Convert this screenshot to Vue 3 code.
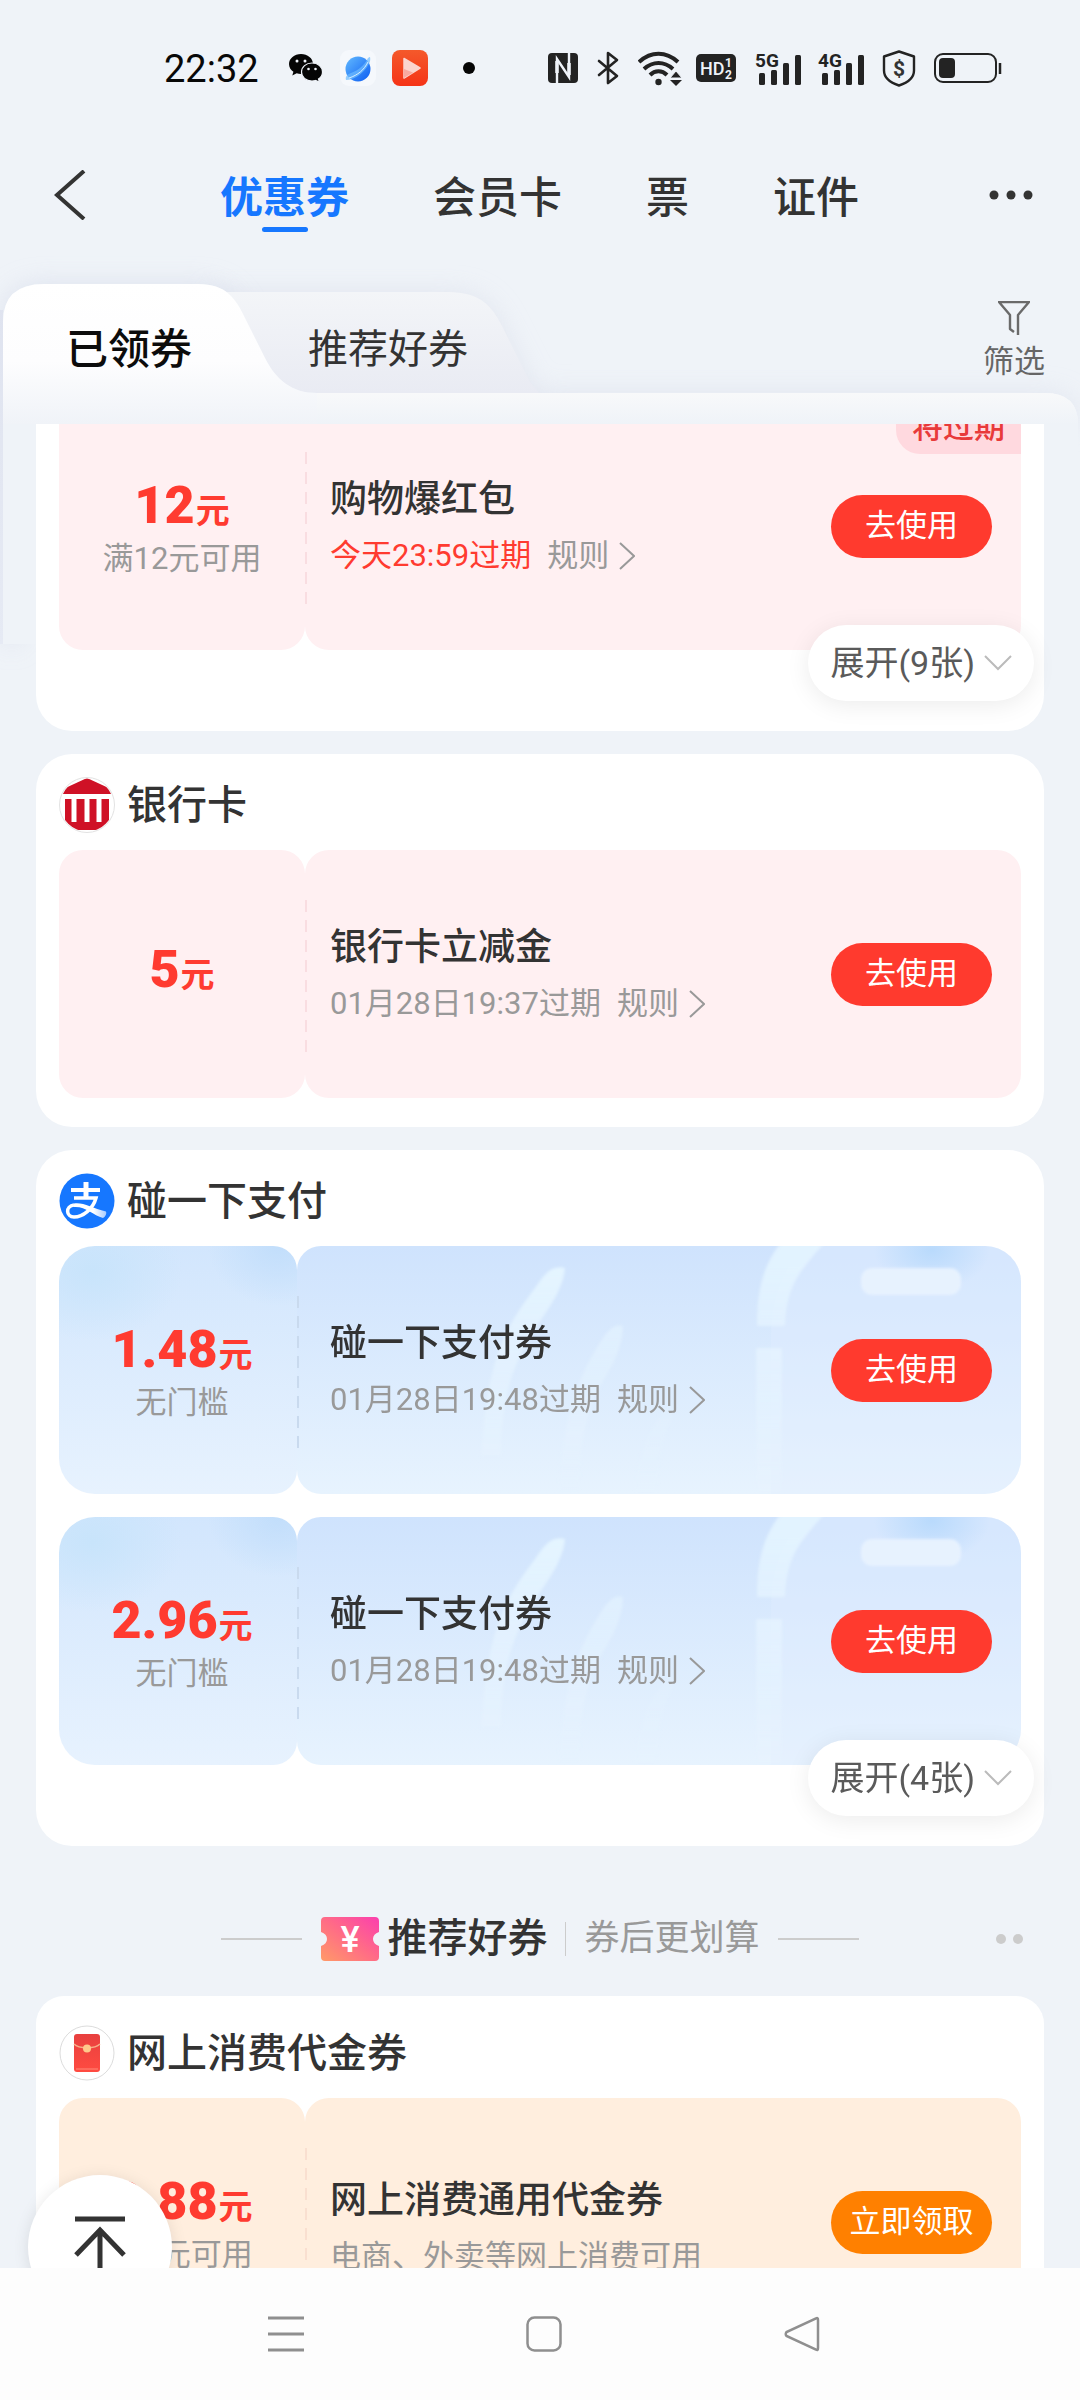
<script setup>
import { ref } from 'vue'

const topTabs = ['优惠券', '会员卡', '票', '证件']
const activeTop = ref(0)

const groups = [
  {
    id: 'shop',
    expand: '展开(9张)',
    coupons: [
      { amount: '12', cond: '满12元可用', title: '购物爆红包', note: '今天23:59过期', urgent: true, rule: true, badge: '将过期', tone: 'pink', action: '去使用' },
    ],
  },
  {
    id: 'bank',
    name: '银行卡',
    coupons: [
      { amount: '5', title: '银行卡立减金', note: '01月28日19:37过期', rule: true, tone: 'pink', action: '去使用' },
    ],
  },
  {
    id: 'alipay',
    name: '碰一下支付',
    expand: '展开(4张)',
    coupons: [
      { amount: '1.48', cond: '无门槛', title: '碰一下支付券', note: '01月28日19:48过期', rule: true, tone: 'blue', action: '去使用' },
      { amount: '2.96', cond: '无门槛', title: '碰一下支付券', note: '01月28日19:48过期', rule: true, tone: 'blue', action: '去使用' },
    ],
  },
  {
    id: 'online',
    name: '网上消费代金券',
    recommended: true,
    coupons: [
      { amount: '8.88', cond: '满9元可用', title: '网上消费通用代金券', note: '电商、外卖等网上消费可用', tone: 'orange', action: '立即领取' },
    ],
  },
]
</script>

<template>
  <div class="app">
    <div class="status">
      <span class="clock">22:32</span>
      <svg class="wechat" width="34" height="28" viewBox="0 0 34 28">
        <path d="M12 0C5.400 0 0 4.500 0 10c0 3.200 1.700 6 4.400 7.800L3.300 21.500l4.400-2.200c1.300.4 2.700.6 4.300.6 6.600 0 12-4.500 12-10S18.600 0 12 0z" fill="#050505" />
        <path d="M23 9c-6 0-10.500 4-10.500 9s4.500 9 10.500 9c1.300 0 2.500-.2 3.600-.5l3.900 1.900-1-3.300c2.500-1.700 4-4.200 4-7.100 0-5-4.500-9-10.500-9z" fill="#050505" stroke="#eff3f9" stroke-width="1.200" />
        <circle cx="8" cy="7" r="1.500" fill="#eff3f9" /><circle cx="16" cy="7" r="1.500" fill="#eff3f9" />
        <circle cx="19.500" cy="15" r="1.300" fill="#eff3f9" /><circle cx="26.500" cy="15" r="1.300" fill="#eff3f9" />
      </svg>
      <svg class="planet" width="36" height="36" viewBox="0 0 36 36">
        <defs>
          <linearGradient id="globe" x1="0" y1="0" x2="1" y2="1"><stop offset="0" stop-color="#63baff" /><stop offset="1" stop-color="#0b5cf2" /></linearGradient>
        </defs>
        <rect width="36" height="36" rx="9" fill="#f5f8fc" />
        <circle cx="18" cy="19" r="12.500" fill="url(#globe)" />
        <path d="M6 30c-1-4 2-6 5-7C19 20 24 15 27 10c1-3 3-3 3-3 1 4-1 7-3 10C22 24 14 30 6 30z" fill="#6dbcff" opacity=".7" />
        <path d="M9 28c9-3 15-8 19-16" stroke="#d9f0ff" stroke-width="1" fill="none" />
      </svg>
      <svg class="player" width="36" height="36" viewBox="0 0 36 36">
        <defs>
          <linearGradient id="play" x1="0" y1="0" x2="0" y2="1"><stop offset="0" stop-color="#f4592b" /><stop offset="1" stop-color="#f53317" /></linearGradient>
        </defs>
        <rect width="36" height="36" rx="8" fill="url(#play)" />
        <path d="M12 8.500L28 18 12 28z" fill="#fbd5cf" stroke="#fbd5cf" stroke-width="1.500" stroke-linejoin="round" />
        <path d="M12 28V19l9 3.500z" fill="#f8aaa0" />
      </svg>
      <span class="bullet"></span>
      <svg class="nfc" width="30" height="30" viewBox="0 0 30 30">
        <rect width="30" height="30" rx="4" fill="#232323" />
        <path d="M9 30V6l12 18V0" fill="none" stroke="#eff3f9" stroke-width="2.400" />
        <path d="M9 8v12M21 10v12" stroke="#eff3f9" stroke-width="3.500" />
      </svg>
      <svg class="bt" width="22" height="34" viewBox="0 0 22 34">
        <path d="M2 10l18 15-9 7V2l9 7L2 24" fill="none" stroke="#232323" stroke-width="2.600" stroke-linejoin="round" stroke-linecap="round" />
      </svg>
      <svg class="wifi" width="45" height="35" viewBox="0 0 45 35">
        <g fill="none" stroke="#232323" stroke-width="4">
          <path d="M1 11c12-11 27-11 39 0" /><path d="M6 18c9-8 20-8 29 0" /><path d="M12 24c5-5 12-5 17 0" />
        </g>
        <circle cx="20.500" cy="31" r="3.200" fill="#232323" />
        <path d="M38 20l6 7H32z" fill="#232323" stroke="#eff3f9" /><path d="M38 35l6-6H32z" fill="#232323" />
      </svg>
      <svg class="hd" width="40" height="28" viewBox="0 0 40 28">
        <rect width="40" height="28" rx="5" fill="#232323" />
        <text x="4" y="21" font-size="18" font-weight="500" fill="#eff3f9" font-family="Roboto, sans-serif">HD</text>
        <text x="29" y="13" font-size="12" font-weight="700" fill="#eff3f9" font-family="Roboto, sans-serif">1</text>
        <text x="29" y="25" font-size="12" font-weight="700" fill="#eff3f9" font-family="Roboto, sans-serif">2</text>
      </svg>
      <svg v-for="g in ['5G', '4G']" :key="g" class="signal" width="47" height="33" viewBox="0 0 47 33">
        <g fill="#232323">
          <rect x="4" y="21" width="6" height="12" rx="1.500" /><rect x="16" y="18" width="6" height="15" rx="1.500" />
          <rect x="28" y="11" width="6" height="22" rx="1.500" /><rect x="40" y="3" width="6" height="30" rx="1.500" />
          <text x="0" y="15" font-size="19" font-weight="700" font-family="Roboto, sans-serif">{{ g }}</text>
        </g>
      </svg>
      <svg class="shield" width="34" height="37" viewBox="0 0 34 37">
        <path d="M17 1.500l15 5v14c0 8-6 12-15 15C8 32.500 2 28.500 2 20.500v-14z" fill="none" stroke="#232323" stroke-width="2.400" stroke-linejoin="round" />
        <text x="17" y="26" text-anchor="middle" font-size="21" font-weight="700" fill="#333" font-family="Roboto, sans-serif">$</text>
      </svg>
      <svg class="battery" width="68" height="30" viewBox="0 0 68 30">
        <rect x="1" y="1" width="61" height="28" rx="8" fill="none" stroke="#232323" stroke-width="2" />
        <rect x="5" y="5" width="16" height="20" rx="4" fill="#232323" />
        <path d="M66 10v11" stroke="#232323" stroke-width="2.500" />
      </svg>
    </div>

    <header class="topbar">
      <button class="icon-btn back" aria-label="返回">
        <svg width="32" height="50" viewBox="0 0 32 50"><path d="M30 1L3 25l27 24" fill="none" stroke="#333" stroke-width="4" /></svg>
      </button>
      <nav class="tabs">
        <button v-for="(t, i) in topTabs" :key="t" class="tab" :class="{ on: i === activeTop }" @click="activeTop = i">{{ t }}</button>
      </nav>
      <button class="icon-btn more" aria-label="更多">
        <svg width="44" height="10" viewBox="0 0 44 10"><g fill="#333"><circle cx="5" cy="5" r="4.500" /><circle cx="22" cy="5" r="4.500" /><circle cx="39" cy="5" r="4.500" /></g></svg>
      </button>
    </header>

    <div class="folder">
      <svg class="folder-bg" viewBox="0 0 1080 410" preserveAspectRatio="none">
        <defs>
          <linearGradient id="front" gradientUnits="userSpaceOnUse" x1="0" y1="34" x2="0" y2="174"><stop offset="0" stop-color="#fff" /><stop offset=".55" stop-color="#fdfdfe" /><stop offset="1" stop-color="#f0f3f8" /></linearGradient>
          <linearGradient id="strip" gradientUnits="userSpaceOnUse" x1="0" y1="143" x2="0" y2="174"><stop offset="0" stop-color="#f8f9fa" /><stop offset="1" stop-color="#eff3f8" /></linearGradient>
          <linearGradient id="rear" gradientUnits="userSpaceOnUse" x1="0" y1="42" x2="0" y2="143"><stop offset="0" stop-color="#f3f5f8" /><stop offset="1" stop-color="#e9ebf3" /></linearGradient>
          <linearGradient id="side" gradientUnits="userSpaceOnUse" x1="0" y1="40" x2="0" y2="395"><stop offset="0" stop-color="#dfe3ef" /><stop offset="1" stop-color="#e6eaf4" /></linearGradient>
          <filter id="soft" x="-10%" y="-20%" width="120%" height="140%"><feGaussianBlur stdDeviation="13" /></filter>
        </defs>
        <path d="M210 42H448C480 42 492 56 502 76L530 132Q536 143 550 143H1045Q1078 143 1078 176H200Z" fill="#dde1ec" filter="url(#soft)" opacity=".75" />
        <path d="M3 394V72Q3 34 44 34H198C226 34 236 48 246 70L270 115C280 134 292 143 317 143V174H20V394Z" fill="#d9deeb" filter="url(#soft)" opacity=".8" />
        <path d="M0 60V394H3V60Z" fill="url(#side)" />
        <path d="M220 42H448C480 42 492 56 502 76L530 132L540 144H220Z" fill="url(#rear)" />
        <path d="M3 394V72Q3 34 44 34H198C226 34 236 48 246 70L265 108C276 130 292 143 317 143H1045Q1078 143 1078 174V394Z" fill="#eff3f8" />
        <path d="M3 174V72Q3 34 44 34H198C226 34 236 48 246 70L265 108C276 130 292 143 317 143H1045Q1078 143 1078 174Z" fill="url(#front)" />
        <path d="M317 143H1045Q1078 143 1078 174H317Z" fill="url(#strip)" />
      </svg>
      <button class="ftab front">已领券</button>
      <button class="ftab rear">推荐好券</button>
      <button class="filter">
        <svg width="32" height="35" viewBox="0 0 32 35"><path d="M25 1H1l0 0 11 13v14l4 3M20 34V14L31 1H1" fill="none" stroke="#6a6a6a" stroke-width="2.400" stroke-linejoin="round" /></svg>
        <span>筛选</span>
      </button>
    </div>

    <main class="scroller">
      <div class="list">
        <template v-for="g in groups" :key="g.id">
          <div v-if="g.recommended" class="divider">
            <span class="rule-line"></span>
            <svg class="ticket" width="58" height="44" viewBox="0 0 58 44">
              <defs><linearGradient id="tk" x1="0" y1="1" x2="1" y2="0"><stop offset="0" stop-color="#ff9a68" /><stop offset=".5" stop-color="#ff6c86" /><stop offset="1" stop-color="#fb3fae" /></linearGradient></defs>
              <path d="M4 0H54Q58 0 58 4V15Q52 17 52 22T58 29V40Q58 44 54 44H4Q0 44 0 40V29Q6 27 6 22T0 15V4Q0 0 4 0Z" fill="url(#tk)" />
              <text x="29" y="35" text-anchor="middle" font-size="36" font-weight="500" fill="#fff" font-family="Roboto, sans-serif">¥</text>
            </svg>
            <h2>推荐好券</h2>
            <span class="bar"></span>
            <span class="tagline">券后更划算</span>
            <span class="rule-line"></span>
            <span class="pager"><i></i><i></i></span>
          </div>

          <section class="card" :class="{ expandable: g.expand, roomy: g.recommended }">
            <header v-if="g.name" class="card-head">
              <svg v-if="g.id === 'bank'" width="56" height="56" viewBox="0 0 56 56">
                <defs><clipPath id="disc"><circle cx="28" cy="28" r="26.500" /></clipPath></defs>
                <circle cx="28" cy="28" r="27.500" fill="#fff" stroke="#e2e2e2" />
                <g clip-path="url(#disc)">
                  <path d="M28 1L54 13V17H2V13Z" fill="#cf1126" />
                  <path d="M6 22H50V45L40 53H16L6 45Z" fill="#cf1126" />
                  <path d="M15 22v23M28 22v23M40 22v23" stroke="#fff" stroke-width="5" />
                </g>
              </svg>
              <svg v-else-if="g.id === 'alipay'" width="56" height="56" viewBox="0 0 56 56">
                <defs><linearGradient id="tail" x1="0" y1="0" x2="1" y2="0"><stop offset=".6" stop-color="#fff" /><stop offset="1" stop-color="#a9ccff" /></linearGradient></defs>
                <circle cx="28" cy="28" r="27.500" fill="#1677ff" />
                <g fill="none" stroke="#fff">
                  <path d="M12 17H41" stroke-width="4" /><path d="M27 9V25" stroke-width="5" />
                  <path d="M15 25H37C34 36 24 44 15 44C7 44 6 33 15 32" stroke-width="3.500" />
                </g>
                <path d="M15 30.500C24 29 33 35 47 38.500C48 41 46 44 44 45C34 42 26 33 15 34Z" fill="url(#tail)" />
              </svg>
              <svg v-else width="56" height="56" viewBox="0 0 56 56">
                <defs><linearGradient id="env" x1="0" y1="0" x2="0" y2="1"><stop offset="0" stop-color="#e8403f" /><stop offset="1" stop-color="#ff4b41" /></linearGradient></defs>
                <circle cx="28" cy="28" r="27" fill="#fff" stroke="#dcdcdc" />
                <rect x="15" y="9" width="26" height="38" rx="3" fill="url(#env)" />
                <path d="M15 19C20 24 36 24 41 19" fill="none" stroke="#f6b08a" stroke-width="1.500" />
                <path d="M17 44H39" stroke="#ff8b7a" />
                <circle cx="28" cy="23.500" r="4" fill="#ffc98b" />
              </svg>
              <h2>{{ g.name }}</h2>
            </header>

            <div class="coupons">
              <article v-for="(c, i) in g.coupons" :key="i" class="coupon" :class="c.tone">
                <div class="value">
                  <p class="price"><b>{{ c.amount }}</b>元</p>
                  <p v-if="c.cond" class="cond">{{ c.cond }}</p>
                </div>
                <div class="detail">
                  <svg v-if="c.tone === 'blue'" class="art" viewBox="0 0 724 248" preserveAspectRatio="none">
                    <defs>
                      <linearGradient id="ray" gradientUnits="userSpaceOnUse" x1="0" y1="20" x2="0" y2="248"><stop offset="0" stop-color="#e4f4ff" /><stop offset="1" stop-color="#e8f4ff" stop-opacity=".3" /></linearGradient>
                      <radialGradient id="spot"><stop offset="0" stop-color="#b9dafc" /><stop offset="1" stop-color="#b9dafc" stop-opacity="0" /></radialGradient>
                      <filter id="haze"><feGaussianBlur stdDeviation="1.500" /></filter>
                    </defs>
                    <path d="M508 0H724V248H474V90Q474 35 508 0Z" fill="#e2eefe" opacity=".35" />
                    <ellipse cx="635" cy="4" rx="58" ry="40" fill="url(#spot)" />
                    <g filter="url(#haze)">
                      <path d="M268 22C254 18 246 30 238 42C204 86 190 120 184 210L204 210C206 150 214 120 240 80C256 56 266 42 268 22Z" fill="url(#ray)" />
                      <path d="M326 80C316 76 308 88 302 98C278 136 264 180 262 244L282 244C284 196 290 160 308 132C320 112 326 96 326 80Z" fill="url(#ray)" opacity=".75" />
                      <path d="M378 158C362 164 340 200 338 244L360 244C362 210 366 190 374 176Z" fill="url(#ray)" opacity=".5" />
                      <path d="M486 -6H530C500 28 490 40 488 80H460C460 44 466 18 486 -6Z" fill="url(#ray)" opacity=".9" />
                      <rect x="459" y="102" width="26" height="146" fill="url(#ray)" />
                      <rect x="564" y="22" width="100" height="27" rx="11" fill="#e7f2fe" />
                    </g>
                  </svg>
                  <div class="copy">
                    <h3>{{ c.title }}</h3>
                    <p class="note">
                      <span :class="{ urgent: c.urgent }">{{ c.note }}</span>
                      <a v-if="c.rule" href="#rule">规则<svg width="16" height="28" viewBox="0 0 16 28"><path d="M1 1l14 13L1 27" fill="none" stroke="currentColor" stroke-width="2" /></svg></a>
                    </p>
                  </div>
                  <button class="cta">{{ c.action }}</button>
                </div>
                <span v-if="c.badge" class="badge">{{ c.badge }}</span>
              </article>
            </div>
            <button v-if="g.expand" class="expand">{{ g.expand }}<svg width="28" height="16" viewBox="0 0 28 16"><path d="M1 1l13 13L27 1" fill="none" stroke="#bbb" stroke-width="2" /></svg></button>
          </section>
        </template>
      </div>
      <button class="to-top" aria-label="回到顶部">
        <svg width="52" height="62" viewBox="0 0 52 62"><path d="M1 3H51M26 62V14M2 39L26 14L50 39" fill="none" stroke="#333" stroke-width="5" /></svg>
      </button>
    </main>

    <nav class="sysnav">
      <button class="icon-btn" aria-label="最近任务"><svg width="36" height="36" viewBox="0 0 36 36"><path d="M0 2H36M0 18H36M0 34H36" stroke="#8f8f8f" stroke-width="3" /></svg></button>
      <button class="icon-btn" aria-label="主页"><svg width="36" height="36" viewBox="0 0 36 36"><rect x="1.500" y="1.500" width="33" height="33" rx="7" fill="none" stroke="#8f8f8f" stroke-width="2.500" /></svg></button>
      <button class="icon-btn" aria-label="返回上一页"><svg width="36" height="36" viewBox="0 0 36 36"><path d="M32 2.500Q34 1 34 4V32Q34 35 32 33.500L2.500 20Q1 18 2.500 16Z" fill="none" stroke="#8f8f8f" stroke-width="2.500" /></svg></button>
    </nav>
  </div>
</template>

<style>
body { background: #eff3f8; }
</style>

<style scoped>
* { box-sizing: border-box; margin: 0; padding: 0; }
.app {
  display: flex;
  flex-direction: column;
  height: 100vh;
  background: #eff3f8;
  color: #333;
  font-family: Roboto, "Noto Sans CJK SC", sans-serif;
}
button { border: 0; background: none; font: inherit; color: inherit; cursor: pointer; white-space: nowrap; }
a { color: inherit; text-decoration: none; }
svg { display: block; flex: none; }
h2, h3 { font-weight: 500; }

.status { display: flex; align-items: center; flex: none; height: 136px; padding-left: 164px; }
.clock { width: 94px; padding-top: 2px; font-size: 38px; line-height: 44px; color: #080808; }
.wechat { margin-left: 31px; }
.planet { margin-left: 17px; }
.player { margin-left: 16px; }
.bullet { width: 12px; height: 12px; margin-left: 35px; border-radius: 50%; background: #050505; }
.nfc { margin-left: 73px; }
.bt { margin-left: 19px; }
.wifi { margin-left: 19px; }
.hd { margin-left: 13px; }
.signal { margin-left: 16px; overflow: visible; }
.hd + .signal { margin-left: 19px; }
.shield { margin-left: 17px; }
.battery { margin-left: 18px; }

.topbar { display: flex; align-items: center; flex: none; height: 118px; padding: 0 47px 0 54px; }
.tabs { display: flex; gap: 84px; margin-top: 5px; margin-left: 134px; }
.tab { position: relative; font-size: 43px; line-height: 60px; font-weight: 500; }
.tab.on { color: #1677ff; font-weight: 700; }
.tab.on::after { content: ""; position: absolute; left: 50%; bottom: -4px; width: 46px; height: 5px; margin-left: -23px; border-radius: 3px; background: #1677ff; }
.more { margin-left: auto; }

.folder { position: relative; display: flex; align-items: center; flex: none; height: 170px; padding: 22px 35px 0 66px; }
.folder-bg { position: absolute; left: 0; top: -4px; width: 100%; height: 410px; overflow: visible; }
.ftab { position: relative; }
.front { font-size: 42px; line-height: 60px; font-weight: 500; color: #0c0c0c; }
.rear { margin-left: 116px; font-size: 40px; line-height: 60px; }
.filter { position: relative; display: flex; flex-direction: column; align-items: center; gap: 4px; margin-left: auto; margin-top: -16px; font-size: 31px; line-height: 44px; color: #666; }

.scroller { position: relative; flex: 1; min-height: 0; overflow: hidden; }
.list { display: flex; flex-direction: column; gap: 23px; margin-top: -46px; padding: 0 36px; }
.card { position: relative; flex: none; padding: 24px 23px 29px; border-radius: 36px; background: #fff; }
.card.expandable { padding-bottom: 81px; }
.card.roomy { padding-top: 30px; border-radius: 28px; }
.card-head { display: flex; align-items: center; gap: 12px; height: 54px; margin-bottom: 18px; }
.card-head h2 { padding-top: 2px; font-size: 40px; line-height: 54px; }
.coupons { display: flex; flex-direction: column; gap: 23px; }

.coupon { --bg: #fff0f2; --dash: #f9dde1; position: relative; display: flex; height: 248px; }
.orange { --bg: #ffeede; --dash: #f9dfd0; }
.value, .detail { border-radius: 24px; background: var(--bg); }
.value { display: flex; flex-direction: column; justify-content: center; align-items: center; flex: none; width: 246px; padding-bottom: 4px; }
.price { font-size: 34px; line-height: 64px; font-weight: 700; color: #ff3b30; white-space: nowrap; }
.price b { margin-right: 1px; font-size: 52px; }
.cond { font-size: 31px; line-height: 32px; color: #999; }
.detail { position: relative; display: flex; align-items: center; flex: 1; min-width: 0; padding: 0 29px 0 25px; overflow: hidden; }
.detail::before { content: ""; position: absolute; left: 0; top: 50px; bottom: 42px; width: 2px; background: repeating-linear-gradient(var(--dash) 0 12px, transparent 12px 20px); }
.blue .value { width: 238px; padding-left: 8px; border-radius: 36px 24px 24px 36px; background: radial-gradient(70px 60px at 92% 0, #c2defb, transparent), radial-gradient(90px 70px at 14% 10%, #c8e4fb, transparent), linear-gradient(#d2e6fd, #e7f2fe); }
.blue .detail { padding-left: 33px; border-radius: 24px 36px 36px 24px; background: linear-gradient(#cfe3fd, #e7f3fe); --dash: #c9daee; }
.art { position: absolute; left: 0; top: 0; width: 100%; height: 100%; }
.copy { position: relative; flex: 1; min-width: 0; }
.orange .copy { padding-top: 10px; }
.copy h3 { font-size: 37px; line-height: 52px; white-space: nowrap; }
.note { display: flex; gap: 16px; margin-top: 8px; font-size: 31px; line-height: 44px; color: #999; white-space: nowrap; }
.note a { display: flex; align-items: center; gap: 10px; }
.urgent { color: #ff3b30; }
.cta { position: relative; width: 161px; height: 63px; border-radius: 32px; background: #ff3a2e; color: #fff; font-size: 31px; line-height: 44px; }
.orange .cta { background: #ff8000; }
.badge { position: absolute; right: 0; top: 0; padding: 0 16px; border-radius: 0 24px 0 24px; background: #ffd9df; color: #e83a3a; font-size: 31px; line-height: 52px; font-weight: 500; }
.expand { position: absolute; right: 10px; bottom: 30px; display: flex; align-items: center; gap: 9px; height: 76px; padding: 0 22px; border-radius: 38px; background: #fff; box-shadow: 0 4px 24px rgba(0, 0, 0, .08); color: #5a5a5a; font-size: 34px; line-height: 48px; }

.divider { position: relative; display: flex; align-items: center; justify-content: center; height: 104px; margin-top: 18px; margin-bottom: -18px; }
.rule-line { width: 81px; height: 2px; background: #ccc; }
.ticket { margin-left: 19px; }
.divider h2 { margin-left: 8px; font-size: 40px; line-height: 60px; }
.bar { width: 1px; height: 34px; margin: 0 18px; background: #ccc; }
.tagline { margin-right: 18px; font-size: 35px; line-height: 48px; color: #999; }
.pager { position: absolute; right: 21px; top: 47px; display: flex; gap: 7px; }
.pager i { width: 10px; height: 10px; border-radius: 50%; background: #ccc; }

.to-top { position: absolute; left: 28px; bottom: -51px; width: 144px; height: 144px; padding: 39px 46px; border-radius: 50%; background: #fff; box-shadow: 0 2px 16px rgba(0, 0, 0, .1); }

.sysnav { position: relative; display: flex; align-items: center; justify-content: center; flex: none; gap: 222px; height: 132px; padding-left: 8px; background: #fdfdfd; }
</style>
